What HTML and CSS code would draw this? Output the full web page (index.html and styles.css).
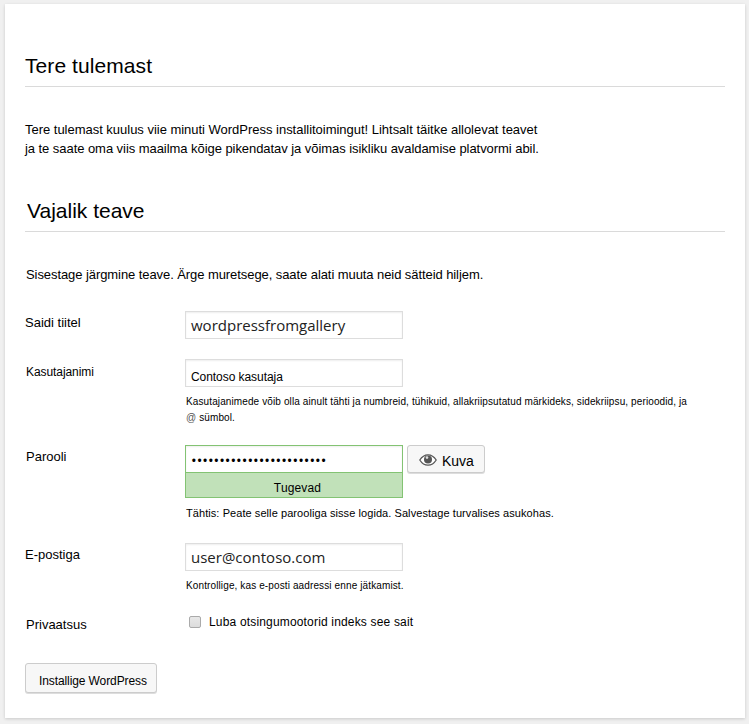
FILE: index.html
```
<!DOCTYPE html>
<html lang="et">
<head>
<meta charset="utf-8">
<title>WordPress</title>
<link rel="stylesheet" href="styles.css">
</head>
<body>
<main class="card">
  <h1 class="heading heading-welcome">Tere tulemast</h1>
  <p class="intro"><span class="intro-first">Tere tulemast kuulus viie minuti WordPress installitoimingut! Lihtsalt täitke allolevat teavet</span><br><span class="intro-second">ja te saate oma viis maailma kõige pikendatav ja võimas isikliku avaldamise platvormi abil.</span></p>
  <h2 class="heading heading-info">Vajalik teave</h2>
  <p class="lead">Sisestage järgmine teave. Ärge muretsege, saate alati muuta neid sätteid hiljem.</p>
  <form class="form">
    <div class="row row-title">
      <div class="label">Saidi tiitel</div>
      <div class="field"><div class="input">wordpressfromgallery</div></div>
    </div>
    <div class="row row-user">
      <div class="label label-user">Kasutajanimi</div>
      <div class="field">
        <div class="input input-user">Contoso kasutaja</div>
        <p class="hint hint-user">Kasutajanimede võib olla ainult tähti ja numbreid, tühikuid, allakriipsutatud märkideks, sidekriipsu, perioodid, ja<br><span class="at">@</span> sümbol.</p>
      </div>
    </div>
    <div class="row row-password">
      <div class="label label-password">Parooli</div>
      <div class="field">
        <div class="password">
          <div class="password-box">
            <div class="input input-password">••••••••••••••••••••••••</div>
            <div class="strength">Tugevad</div>
          </div>
          <div class="button show">
            <svg class="eye" viewBox="0 0 18 12" width="18" height="12"><path d="M.8 6C3 2.500 5.700.8 9 .8S15 2.500 17.200 6C15 9.500 12.300 11.200 9 11.200S3 9.500.8 6Z" fill="#fff" stroke="#555" stroke-width="1.300"/><circle cx="9" cy="5.400" r="4" fill="#555"/><circle cx="8" cy="3.600" r="1.300" fill="#ddd"/></svg>
            <span>Kuva</span>
          </div>
        </div>
        <p class="hint hint-password">Tähtis: Peate selle parooliga sisse logida. Salvestage turvalises asukohas.</p>
      </div>
    </div>
    <div class="row row-email">
      <div class="label">E-postiga</div>
      <div class="field">
        <div class="input input-email">user@contoso.com</div>
        <p class="hint hint-email">Kontrollige, kas e-posti aadressi enne jätkamist.</p>
      </div>
    </div>
    <div class="row row-privacy">
      <div class="label label-privacy">Privaatsus</div>
      <div class="field check"><span class="checkbox"></span><span class="check-text">Luba otsingumootorid indeks see sait</span></div>
    </div>
    <div class="button install">Installige WordPress</div>
  </form>
</main>
</body>
</html>
```
FILE: styles.css
```
* { box-sizing: border-box; }
body {
  margin: 0;
  padding: 4px 4px 6px 5px;
  height: 724px;
  background: #f0f0f0;
  color: #000;
  font: 13px/19px "Liberation Sans", Arial, sans-serif;
  white-space: nowrap;
  overflow: hidden;
}
p { margin: 0; }
.card {
  height: 714px;
  padding: 50px 20px 0;
  background: #fff;
  box-shadow: 0 1px 3px rgba(0, 0, 0, .16);
}
.heading {
  margin: 0;
  padding-bottom: 8px;
  border-bottom: 1px solid #dadada;
  font-size: 21px;
  line-height: 24px;
  font-weight: 400;
}
.heading-welcome { letter-spacing: .08px; }
.intro { margin-top: 33px; }
.intro-first { letter-spacing: -.02px; }
.intro-second { letter-spacing: -.055px; }
.heading-info { margin-top: 41px; padding-left: 2px; }
.lead { margin-top: 33px; padding-left: 1px; letter-spacing: -.075px; }
.form { margin-top: 27px; }
.row { display: grid; grid-template-columns: 160px 1fr; align-items: start; }
.row-title { height: 48px; }
.row-user { height: 86px; }
.row-password { height: 98px; }
.row-email { height: 67px; }
.row-privacy { height: 53px; }
.label { padding-top: 2px; }
.label-user { padding: 4px 0 0 1px; font-size: 12px; letter-spacing: -.08px; }
.label-password { padding-left: 1px; }
.label-privacy { padding: 5px 0 0 1px; }
.input {
  width: 218px;
  height: 28px;
  padding: 0 5px;
  border: 1px solid #ddd;
  background: #fff;
  box-shadow: inset 0 1px 2px rgba(0, 0, 0, .07);
  color: #222;
  font: 15px/26px "Open Sans", sans-serif;
}
.input-user {
  padding-top: 4px;
  color: #000;
  font: 12px/26px "Liberation Sans", sans-serif;
  letter-spacing: -.06px;
}
.hint { padding-left: 1px; font-size: 10px; line-height: 16px; }
.hint-user { margin-top: 7px; letter-spacing: .113px; }
.at { color: #555; }
.password { display: flex; gap: 4px; align-items: flex-start; }
.input-password { padding-top: 1px; border-color: #83c373; color: #000; }
.strength {
  height: 25px;
  padding-left: 7px;
  border: 1px solid #83c373;
  border-top: 0;
  background: #c1e1b9;
  font-size: 12px;
  line-height: 30px;
  letter-spacing: .15px;
  text-align: center;
}
.button {
  border: 1px solid #ccc;
  border-radius: 3px;
  background: #f7f7f7;
  box-shadow: 0 1px 0 #ddd;
}
.show {
  display: flex;
  width: 78px;
  height: 28px;
  padding-left: 11px;
  gap: 5px;
  font-size: 14px;
  line-height: 31px;
}
.eye { margin-top: 8px; }
.hint-password { margin-top: 7px; font-size: 11px; letter-spacing: .07px; }
.hint-email { margin-top: 7px; letter-spacing: .12px; }
.check { display: flex; padding: 6px 0 0 4px; }
.checkbox {
  width: 12px;
  height: 12px;
  border: 1px solid #aaa;
  border-radius: 2px;
  background: linear-gradient(#e8e8e8, #dcdcdc);
}
.check-text { margin: -3px 0 0 8px; font-size: 12px; letter-spacing: .17px; }
.install {
  width: 132px;
  height: 30px;
  padding-left: 13px;
  font-size: 12px;
  line-height: 34px;
  letter-spacing: -.1px;
}
```
